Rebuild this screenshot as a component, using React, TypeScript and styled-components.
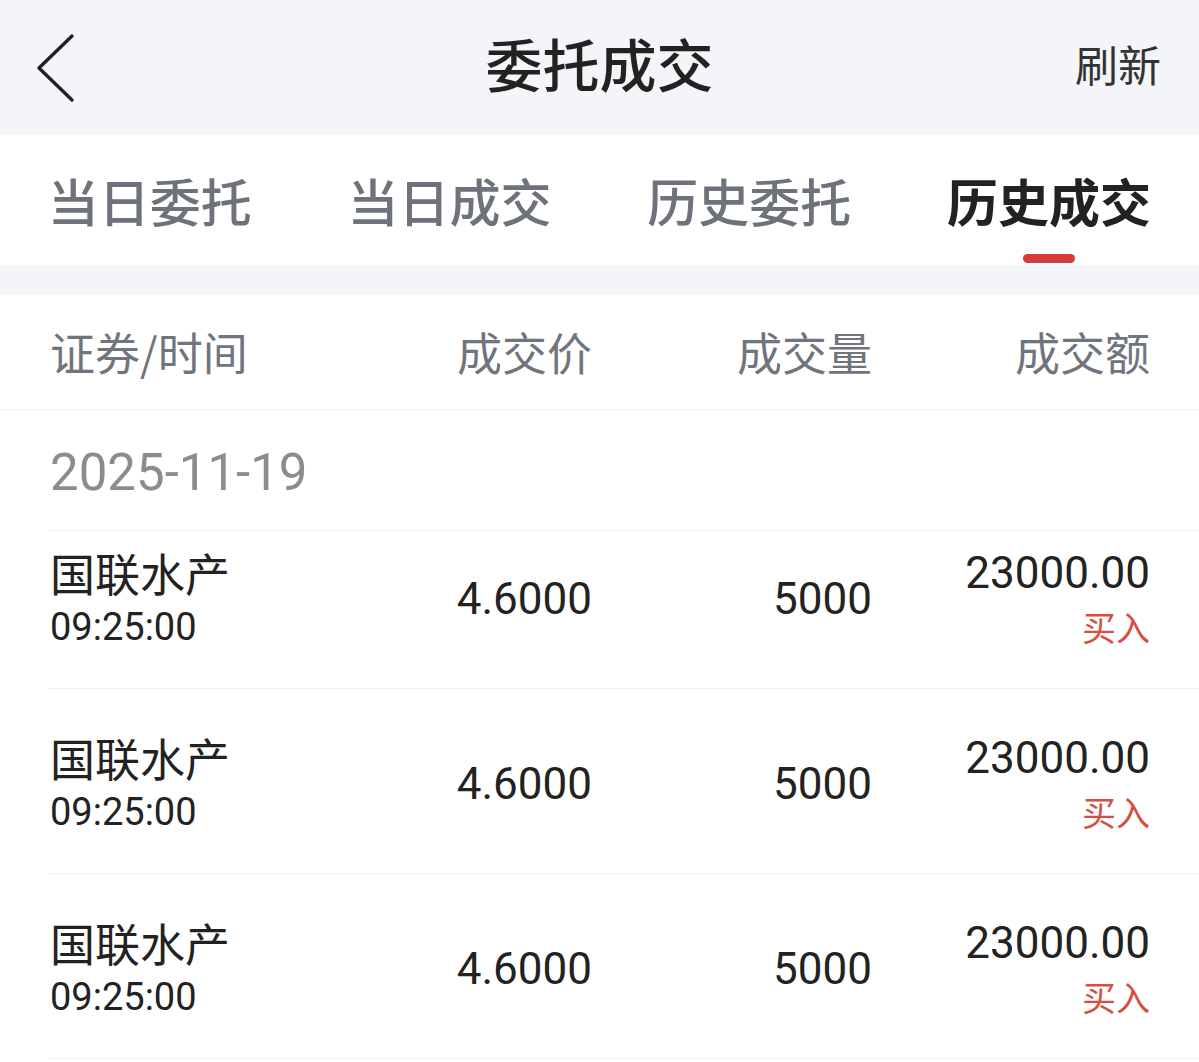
import { FC } from 'react';
import styled, { createGlobalStyle } from 'styled-components';

const GlobalStyle = createGlobalStyle`
    html, body {
        margin: 0;
        padding: 0;
        background: #ffffff;
    }
    body {
        font-family: Roboto, "Noto Sans CJK SC", sans-serif;
        color: #222222;
    }
`;

const Page = styled.div`
    width: 1199px;
    background: #ffffff;
`;

const NavBar = styled.div`
    height: 135px;
    background: #f4f5f9;
    display: grid;
    grid-template-columns: 200px 1fr 200px;
    align-items: center;
`;

const BackButton = styled.div`
    display: flex;
    align-items: center;
    padding-left: 36px;
    height: 100%;
`;

const Title = styled.div`
    text-align: center;
    font-family: "Noto Sans CJK SC", sans-serif;
    font-size: 57px;
    font-weight: 500;
    color: #222222;
    margin-top: -12px;
`;

const Refresh = styled.div`
    text-align: right;
    padding-right: 38px;
    font-family: "Noto Sans CJK SC", sans-serif;
    font-size: 43px;
    color: #333333;
    margin-top: -10px;
`;

const TabBar = styled.div`
    height: 131px;
    background: #ffffff;
    border-bottom: 1px solid #eceef2;
    display: grid;
    grid-template-columns: repeat(4, 1fr);
`;

const Tab = styled.div<{ $active?: boolean }>`
    position: relative;
    display: flex;
    align-items: center;
    justify-content: center;
    padding-bottom: 2px;
    font-family: "Noto Sans CJK SC", sans-serif;
    font-size: 51px;
    font-weight: ${p => (p.$active ? 700 : 500)};
    color: ${p => (p.$active ? '#222222' : '#6e737b')};
`;

const Indicator = styled.span`
    position: absolute;
    bottom: 3px;
    left: 50%;
    width: 52px;
    height: 9px;
    margin-left: -26px;
    border-radius: 5px;
    background: #d33a3a;
`;

const Band = styled.div`
    height: 28px;
    background: #f4f5f9;
`;

const HeaderRow = styled.div`
    height: 114px;
    border-bottom: 1px solid #eeeeee;
    display: grid;
    grid-template-columns: 262px 280px 280px 1fr;
    align-items: center;
    padding: 0 49px 0 50px;
    font-family: "Noto Sans CJK SC", sans-serif;
    font-size: 45px;
    color: #70757d;
`;

const HeadCell = styled.div<{ $right?: boolean }>`
    text-align: ${p => (p.$right ? 'right' : 'left')};
    margin-top: -2px;
`;

const DateRow = styled.div`
    margin-left: 48px;
    padding-left: 2px;
    height: 120px;
    line-height: 126px;
    border-bottom: 1px solid #eeeeee;
    font-size: 51px;
    color: #8c8c8c;
`;

const TradeRow = styled.div<{ $first?: boolean }>`
    margin-left: 48px;
    padding: ${p => (p.$first ? '15px' : '42px')} 49px 34px 2px;
    border-bottom: 1px solid #eeeeee;
    display: grid;
    grid-template-columns: 262px 280px 280px 1fr;
`;

const Stack = styled.div<{ $right?: boolean }>`
    display: flex;
    flex-direction: column;
    align-items: ${p => (p.$right ? 'flex-end' : 'flex-start')};
`;

const StockName = styled.div`
    font-family: "Noto Sans CJK SC", sans-serif;
    font-size: 45px;
    line-height: 54px;
    color: #222222;
`;

const TimeText = styled.div`
    font-size: 38px;
    line-height: 54px;
    color: #222222;
`;

const Num = styled.div`
    font-size: 44px;
    line-height: 54px;
    color: #222222;
`;

const MidCell = styled.div`
    align-self: center;
    text-align: right;
    font-size: 44px;
    color: #222222;
    margin-top: -2px;
`;

const Side = styled.div`
    font-family: "Noto Sans CJK SC", sans-serif;
    font-size: 34px;
    line-height: 54px;
    color: #d5503f;
`;

const trades = [
    { name: '国联水产', time: '09:25:00', price: '4.6000', volume: '5000', amount: '23000.00', side: '买入' },
    { name: '国联水产', time: '09:25:00', price: '4.6000', volume: '5000', amount: '23000.00', side: '买入' },
    { name: '国联水产', time: '09:25:00', price: '4.6000', volume: '5000', amount: '23000.00', side: '买入' },
];

const tabs = ['当日委托', '当日成交', '历史委托', '历史成交'];

const App: FC = () => {
    return (
        <>
            <GlobalStyle />
            <Page>
                <NavBar>
                    <BackButton>
                        <svg width="40" height="70" viewBox="0 0 40 70" fill="none">
                            <path d="M36 3 L3 35 L36 67" stroke="#222" strokeWidth="3.4" strokeLinecap="round" strokeLinejoin="round" />
                        </svg>
                    </BackButton>
                    <Title>委托成交</Title>
                    <Refresh>刷新</Refresh>
                </NavBar>
                <TabBar>
                    {tabs.map((t, i) => (
                        <Tab key={t} $active={i === 3}>
                            {t}
                            {i === 3 && <Indicator />}
                        </Tab>
                    ))}
                </TabBar>
                <Band />
                <HeaderRow>
                    <HeadCell>证券/时间</HeadCell>
                    <HeadCell $right>成交价</HeadCell>
                    <HeadCell $right>成交量</HeadCell>
                    <HeadCell $right>成交额</HeadCell>
                </HeaderRow>
                <DateRow>2025-11-19</DateRow>
                {trades.map((t, i) => (
                    <TradeRow key={i} $first={i === 0}>
                        <Stack>
                            <StockName>{t.name}</StockName>
                            <TimeText>{t.time}</TimeText>
                        </Stack>
                        <MidCell>{t.price}</MidCell>
                        <MidCell>{t.volume}</MidCell>
                        <Stack $right>
                            <Num>{t.amount}</Num>
                            <Side>{t.side}</Side>
                        </Stack>
                    </TradeRow>
                ))}
            </Page>
        </>
    );
};

export default App;
